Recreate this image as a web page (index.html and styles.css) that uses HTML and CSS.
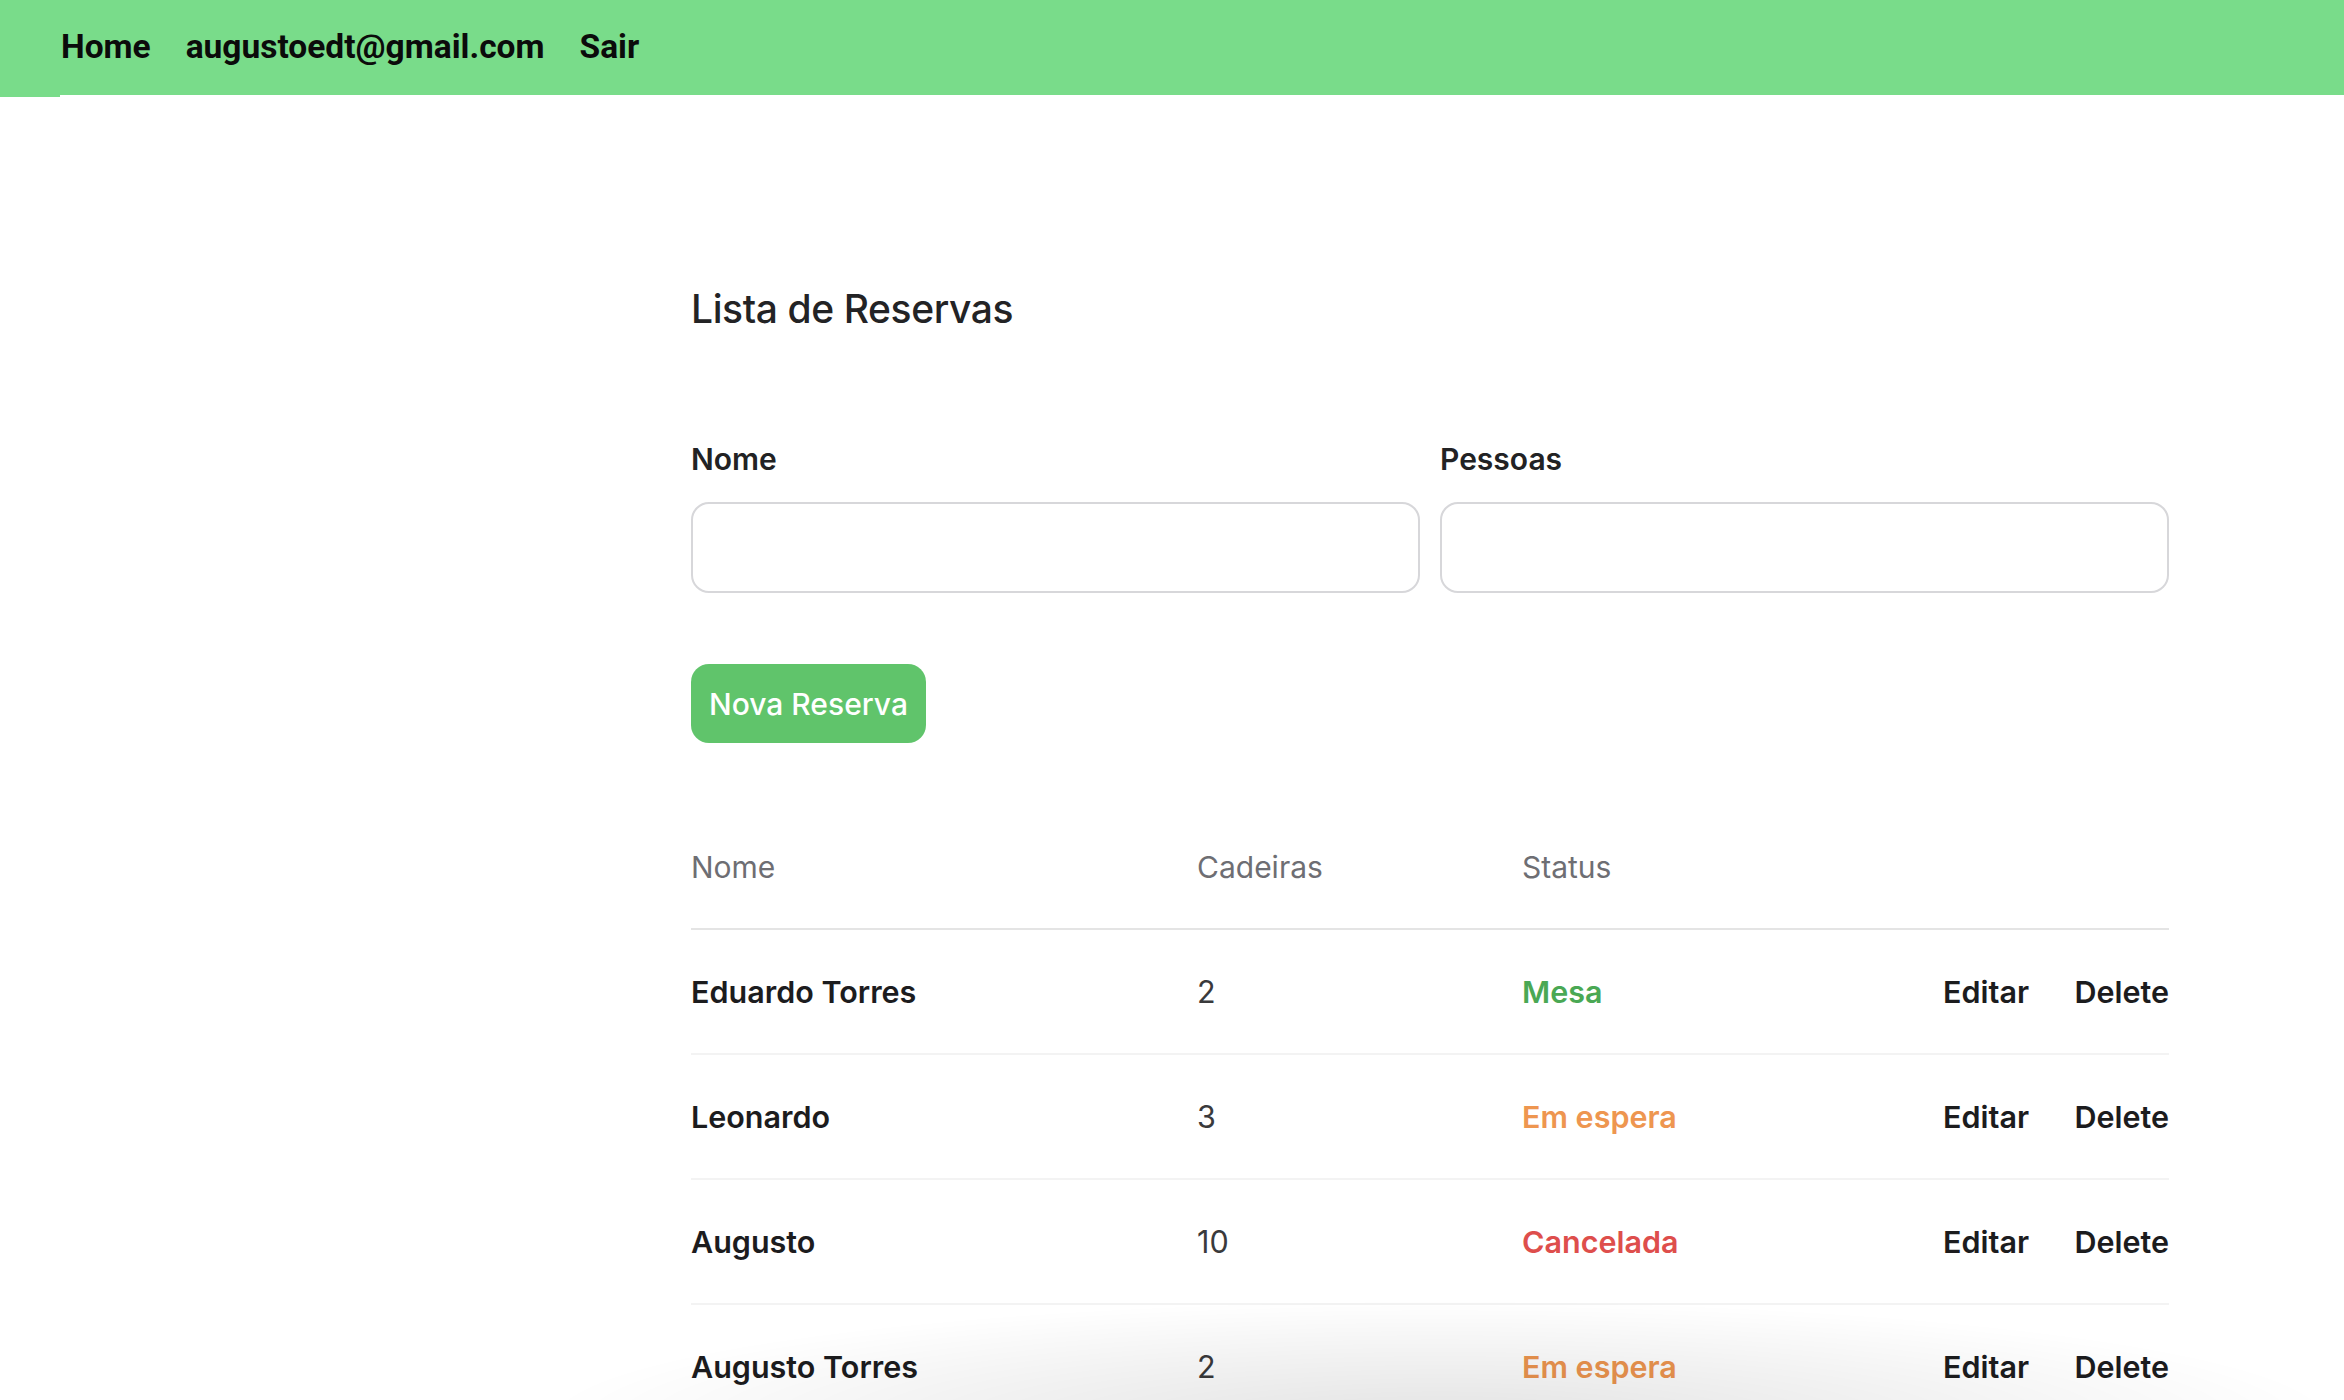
FILE: index.html
```html
<!DOCTYPE html>
<html lang="pt">
<head>
<meta charset="utf-8">
<title>Lista de Reservas</title>
<link rel="stylesheet" href="styles.css">
</head>
<body>
<nav class="topnav">
  <a class="nav-link" href="#">Home</a>
  <a class="nav-link" href="#">augustoedt@gmail.com</a>
  <a class="nav-link" href="#">Sair</a>
</nav>
<main class="page">
  <h1 class="title">Lista de Reservas</h1>
  <form class="form">
    <div class="fields">
      <label class="field">
        <span class="field-label">Nome</span>
        <input class="field-input" type="text">
      </label>
      <label class="field">
        <span class="field-label">Pessoas</span>
        <input class="field-input" type="text">
      </label>
    </div>
    <button class="btn-primary" type="button">Nova Reserva</button>
  </form>
  <div class="table">
    <div class="row head">
      <span>Nome</span>
      <span>Cadeiras</span>
      <span>Status</span>
      <span></span>
      <span></span>
    </div>
    <div class="row">
      <span class="name">Eduardo Torres</span>
      <span class="num">2</span>
      <span class="status ok">Mesa</span>
      <a class="action" href="#">Editar</a>
      <a class="action" href="#">Delete</a>
    </div>
    <div class="row">
      <span class="name">Leonardo</span>
      <span class="num">3</span>
      <span class="status wait">Em espera</span>
      <a class="action" href="#">Editar</a>
      <a class="action" href="#">Delete</a>
    </div>
    <div class="row">
      <span class="name">Augusto</span>
      <span class="num">10</span>
      <span class="status cancel">Cancelada</span>
      <a class="action" href="#">Editar</a>
      <a class="action" href="#">Delete</a>
    </div>
    <div class="row">
      <span class="name">Augusto Torres</span>
      <span class="num">2</span>
      <span class="status wait">Em espera</span>
      <a class="action" href="#">Editar</a>
      <a class="action" href="#">Delete</a>
    </div>
  </div>
</main>
<div class="bottom-shade"></div>
</body>
</html>
```

FILE: styles.css
```css
html, body {
  margin: 0;
  padding: 0;
  background: #ffffff;
  overflow: hidden;
}

body {
  font-family: "Inter", "Noto Sans", sans-serif;
  color: #1d1d1f;
}

.topnav {
  position: relative;
  height: 95px;
  background: #79dc8a;
  display: flex;
  align-items: center;
  gap: 35px;
  padding: 0 0 0 61px;
  box-sizing: border-box;
}

.topnav::after {
  content: "";
  position: absolute;
  left: 0;
  bottom: -2px;
  width: 60px;
  height: 2px;
  background: #79dc8a;
}

.nav-link {
  font-family: "Roboto", "Liberation Sans", sans-serif;
  font-weight: 700;
  font-size: 33.5px;
  color: #0b0b0b;
  text-decoration: none;
  line-height: 1;
  margin-top: -2px;
}

.page {
  width: 1478px;
  margin-left: 691px;
  padding-top: 190px;
}

.title {
  margin: 0;
  font-size: 39px;
  line-height: 48px;
  font-weight: 500;
  color: #232325;
  letter-spacing: -0.4px;
}

.form {
  margin-top: 108px;
}

.fields {
  display: grid;
  grid-template-columns: 1fr 1fr;
  gap: 20px;
}

.field {
  display: flex;
  flex-direction: column;
  gap: 25px;
}

.field-label {
  font-size: 30px;
  line-height: 36px;
  font-weight: 600;
  color: #222224;
}

.field-input {
  height: 91px;
  box-sizing: border-box;
  border: 2px solid #d7d7da;
  border-radius: 18px;
  background: #fff;
  font: inherit;
  font-size: 30px;
  padding: 0 20px;
  outline: none;
}

.btn-primary {
  margin-top: 71px;
  height: 79px;
  padding: 0 18px;
  border: 0;
  border-radius: 18px;
  background: #60c46b;
  color: #ffffff;
  font-family: "Inter", sans-serif;
  font-size: 30px;
  font-weight: 500;
  cursor: pointer;
}

.table {
  margin-top: 63px;
}

.row {
  display: grid;
  grid-template-columns: 506px 325px 1fr 87px 96px;
  align-items: center;
  padding: 44px 0 43px;
  line-height: 36px;
  font-size: 30.5px;
  border-bottom: 2px solid #f3f3f3;
}

.row > .action:nth-child(4) {
  justify-self: start;
  margin-left: -43px;
}

.row > .action:nth-child(5) {
  justify-self: end;
}

.head {
  padding: 43px 0 43px;
  border-bottom: 2px solid #e4e4e4;
  color: #6e6e73;
  font-weight: 400;
  font-size: 30px;
}

.name {
  font-weight: 600;
  color: #1c1c1e;
}

.num {
  font-weight: 400;
  color: #3a3a3c;
}

.status {
  font-weight: 600;
}

.status.ok { color: #4aa854; }
.status.wait { color: #ee9650; }
.status.cancel { color: #de4e4c; }

.action {
  font-weight: 600;
  color: #1c1c1e;
  text-decoration: none;
  white-space: nowrap;
}

.bottom-shade {
  position: fixed;
  left: 0;
  right: 0;
  bottom: 0;
  height: 130px;
  pointer-events: none;
  background: radial-gradient(ellipse 900px 120px at 1440px 150px, rgba(0,0,0,0.11), rgba(0,0,0,0.05) 55%, rgba(0,0,0,0) 100%);
}
```
